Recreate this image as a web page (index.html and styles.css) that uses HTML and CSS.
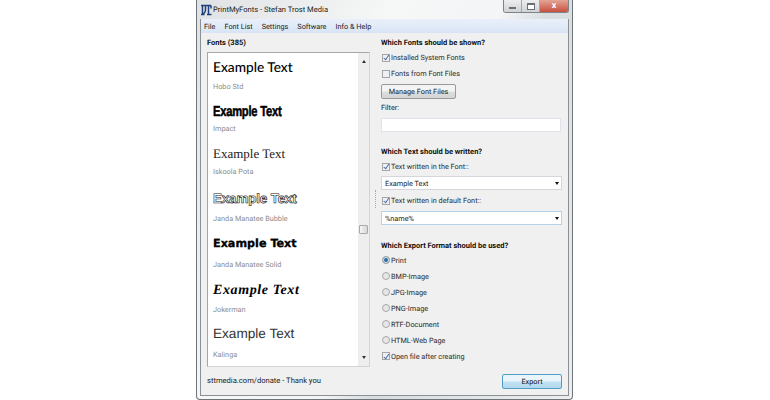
FILE: index.html
```html
<!DOCTYPE html>
<html>

<head>
    <title>PrintMyFonts</title>
    <link rel="stylesheet" href="styles.css">
</head>

<body>
    <div class="window">
        <div class="titlebar">
            <svg class="app-icon" width="12" height="12" viewBox="0 0 12 12">
                <path d="M1 1.5h10M2.5 1.5v9M1 10.5h3.5M5.5 1.5v4.5c0 2-1 3-2 4M8.5 1.5v9M7 10.5h4.5M11 1.5v3" fill="none" stroke="#1d3f7c" stroke-width="1.5"/>
            </svg>
            <span class="title">PrintMyFonts - Stefan Trost Media</span>
            <div class="caption-buttons">
                <span class="cap-btn"><i class="min-glyph"></i></span>
                <span class="cap-btn"><i class="max-glyph"></i></span>
                <span class="cap-btn close">x</span>
            </div>
        </div>
        <div class="inner">
            <div class="menu">
                <span>File</span>
                <span>Font List</span>
                <span>Settings</span>
                <span>Software</span>
                <span>Info &amp; Help</span>
            </div>
            <div class="main">
                <div class="left">
                    <div class="heading">Fonts (385)</div>
                    <div class="list">
                        <div class="items">
                            <div class="item"><div class="sample hobo">Example Text</div><div class="name">Hobo Std</div></div>
                            <div class="item"><div class="sample impact">Example Text</div><div class="name">Impact</div></div>
                            <div class="item"><div class="sample iskoola">Example Text</div><div class="name">Iskoola Pota</div></div>
                            <div class="item"><div class="sample bubble">Example Text</div><div class="name">Janda Manatee Bubble</div></div>
                            <div class="item"><div class="sample solid">Example Text</div><div class="name">Janda Manatee Solid</div></div>
                            <div class="item"><div class="sample joker">Example Text</div><div class="name">Jokerman</div></div>
                            <div class="item"><div class="sample kalinga">Example Text</div><div class="name">Kalinga</div></div>
                        </div>
                        <div class="scrollbar">
                            <span class="arrow up"></span>
                            <span class="thumb"></span>
                            <span class="arrow down"></span>
                        </div>
                    </div>
                    <div class="donate">sttmedia.com/donate - Thank you</div>
                </div>
                <div class="splitter"><span class="grip"></span></div>
                <div class="right">
                    <div class="heading">Which Fonts should be shown?</div>
                    <div class="opt"><span class="check on"></span>Installed System Fonts</div>
                    <div class="opt"><span class="check"></span>Fonts from Font Files</div>
                    <div class="btn manage">Manage Font Files</div>
                    <div class="filter-label">Filter:</div>
                    <div class="input"></div>

                    <div class="heading second">Which Text should be written?</div>
                    <div class="opt"><span class="check on"></span>Text written in the Font::</div>
                    <div class="select">Example Text<span class="drop"></span></div>
                    <div class="opt"><span class="check on"></span>Text written in default Font::</div>
                    <div class="select focus">%name%<span class="drop"></span></div>

                    <div class="heading third">Which Export Format should be used?</div>
                    <div class="opt radio-row"><span class="radio on"></span>Print</div>
                    <div class="opt radio-row"><span class="radio"></span>BMP-Image</div>
                    <div class="opt radio-row"><span class="radio"></span>JPG-Image</div>
                    <div class="opt radio-row"><span class="radio"></span>PNG-Image</div>
                    <div class="opt radio-row"><span class="radio"></span>RTF-Document</div>
                    <div class="opt radio-row"><span class="radio"></span>HTML-Web Page</div>
                    <div class="opt radio-row"><span class="check on"></span>Open file after creating</div>
                    <div class="bottom"><div class="btn export">Export</div></div>
                </div>
            </div>
        </div>
    </div>
</body>

</html>
```
FILE: styles.css
```css
html, body {
    margin: 0;
    height: 400px;
    overflow: hidden;
    background-color: #fff;
}

body {
    display: flex;
    justify-content: center;
    font-family: 'Roboto', sans-serif;
    font-size: 7.3px;
    color: #222;
    text-rendering: geometricPrecision;
}

.window {
    width: 377px;
    height: 400px;
    margin-left: -1px;
    box-sizing: border-box;
    padding: 0 3px 3px 3px;
    border: 1px solid #6f7478;
    border-top: none;
    border-radius: 0 0 4px 4px;
    background: linear-gradient(115deg, #dfe2e4 0%, #f6f7f7 35%, #f4f5f6 55%, #d8dde0 64%, #eceeef 100%);
    display: flex;
    flex-direction: column;
}

.titlebar {
    height: 19px;
    flex: none;
    display: flex;
    align-items: center;
}

.app-icon {
    margin-right: 1px;
}

.title {
    font-size: 7.6px;
    color: #222;
}

.caption-buttons {
    margin-left: auto;
    margin-right: 0;
    align-self: flex-start;
    height: 12px;
    display: flex;
    border: 1px solid #7d8387;
    border-top: none;
    border-radius: 0 0 3px 3px;
    overflow: hidden;
}

.cap-btn {
    width: 17px;
    display: flex;
    align-items: center;
    justify-content: center;
    background: linear-gradient(#eceeef, #d0d3d6);
    border-right: 1px solid #a3a7aa;
}

.cap-btn.close {
    width: 28px;
    border-right: none;
    background: linear-gradient(#e4a596, #c8503f);
    color: #fff;
    font-weight: bold;
    font-size: 9px;
    line-height: 10px;
}

.min-glyph {
    width: 7px;
    height: 2px;
    margin-top: 4px;
    background-color: #fff;
    border: 1px solid #6a7074;
    box-sizing: border-box;
}

.max-glyph {
    width: 8px;
    height: 7px;
    box-sizing: border-box;
    border: 1px solid #6a7074;
    border-top-width: 2px;
    background-color: #fff;
}

.inner {
    flex: 1;
    min-height: 0;
    display: flex;
    flex-direction: column;
    background-color: #f0f0f0;
    border: 1px solid #8b9094;
    border-top: none;
}

.menu {
    height: 14px;
    flex: none;
    display: flex;
    align-items: center;
    padding-left: 3px;
    gap: 9px;
    background: linear-gradient(#eaf0fa, #d8e4f5);
    color: #222;
}

.main {
    flex: 1;
    min-height: 0;
    display: flex;
}

.left {
    width: 163px;
    margin-left: 6px;
    flex: none;
    display: flex;
    flex-direction: column;
}

.heading {
    font-size: 7.5px;
    font-weight: bold;
    color: #111;
    line-height: 12px;
    margin-top: 4px;
}

.list {
    height: 315px;
    margin-top: 3px;
    flex: none;
    box-sizing: border-box;
    display: flex;
    background-color: #fff;
    border: 1px solid #a6a6a6;
    border-bottom-color: #d4d4d4;
    border-right-color: #d4d4d4;
    overflow: hidden;
}

.items {
    flex: 1;
    padding-left: 5px;
}

.sample {
    white-space: nowrap;
    color: #000;
}

.name {
    color: #8c8c8c;
    line-height: 12px;
}

.hobo {
    height: 28px;
    line-height: 28px;
    font-family: 'Lato', sans-serif;
    font-size: 13.7px;
    font-weight: 500;
}

.impact {
    height: 22px;
    line-height: 22px;
    margin-top: 8px;
    font-family: 'Liberation Sans', sans-serif;
    font-size: 14.5px;
    font-weight: bold;
    letter-spacing: -0.3px;
    -webkit-text-stroke: 0.5px #000;
    transform: scaleX(0.77);
    transform-origin: left;
}

.iskoola {
    height: 24px;
    line-height: 24px;
    margin-top: 7px;
    font-family: 'Liberation Serif', serif;
    font-size: 13px;
    color: #222;
}

.bubble {
    height: 29px;
    line-height: 29px;
    margin-top: 6px;
    font-family: 'Liberation Sans', sans-serif;
    font-size: 13.5px;
    font-weight: bold;
    color: #fff;
    -webkit-text-stroke: 0.6px #111;
    letter-spacing: -0.2px;
}

.solid {
    height: 30px;
    line-height: 30px;
    margin-top: 4px;
    font-family: 'DejaVu Sans', sans-serif;
    font-size: 11.2px;
    font-weight: bold;
    -webkit-text-stroke: 0.3px #000;
}

.joker {
    height: 26px;
    line-height: 26px;
    margin-top: 7px;
    font-family: 'Liberation Serif', serif;
    font-size: 14px;
    font-weight: bold;
    font-style: italic;
    letter-spacing: 0.6px;
}

.kalinga {
    height: 30px;
    line-height: 30px;
    margin-top: 3px;
    font-family: 'Liberation Sans', sans-serif;
    font-size: 13.6px;
    color: #333;
}

.scrollbar {
    width: 11px;
    flex: none;
    display: flex;
    flex-direction: column;
    align-items: center;
    background-color: #eeeeee;
    position: relative;
}

.arrow {
    width: 0;
    height: 0;
    border-left: 2px solid transparent;
    border-right: 2px solid transparent;
}

.arrow.up {
    margin-top: 7px;
    border-bottom: 3px solid #333;
}

.arrow.down {
    margin-top: auto;
    margin-bottom: 7px;
    border-top: 3px solid #333;
}

.thumb {
    position: absolute;
    top: 172px;
    left: 1px;
    width: 9px;
    height: 9px;
    box-sizing: border-box;
    border: 1px solid #a8a8a8;
    border-radius: 1px;
    background: linear-gradient(90deg, #f5f5f5, #d8d8d8);
}

.donate {
    margin-top: 8px;
    font-size: 7.6px;
    line-height: 12px;
    color: #222;
}

.splitter {
    width: 11px;
    flex: none;
    display: flex;
    justify-content: center;
}

.grip {
    width: 0;
    height: 18px;
    margin-top: 157px;
    border-left: 1px dotted #a8a8a8;
}

.right {
    flex: none;
    width: 181px;
    display: flex;
    flex-direction: column;
}

.opt {
    display: flex;
    align-items: center;
    height: 15px;
    margin-top: 1px;
    color: #2a2a2a;
    white-space: nowrap;
}

.radio-row {
    height: 16px;
    margin-top: 0;
}

.check {
    width: 8px;
    height: 8px;
    box-sizing: border-box;
    margin: 0 1px 0 1px;
    border: 1px solid #a4a5a5;
    background-color: #eef0f3;
    flex: none;
    position: relative;
}

.check.on::after {
    content: "";
    position: absolute;
    left: 1.5px;
    top: -0.5px;
    width: 2px;
    height: 4.5px;
    border: solid #4a68a8;
    border-width: 0 1px 1px 0;
    transform: rotate(35deg);
}

.radio {
    width: 8px;
    height: 8px;
    box-sizing: border-box;
    margin: 0 1px 0 1px;
    border: 1px solid #a8a8a8;
    border-radius: 50%;
    background-color: #e6e6e6;
    flex: none;
}

.radio.on {
    background-color: #1f6ea8;
    box-shadow: inset 0 0 0 1px #e8e8e8;
}

.btn {
    box-sizing: border-box;
    display: flex;
    align-items: center;
    justify-content: center;
    border: 1px solid #9a9a9a;
    border-radius: 2px;
    background: linear-gradient(#f4f4f4 45%, #dedede 55%, #d4d4d4);
    color: #222;
}

.manage {
    width: 75px;
    height: 15px;
    margin-top: 3px;
}

.filter-label {
    margin-top: 2px;
    line-height: 14px;
    color: #222;
}

.input {
    width: 180px;
    height: 14px;
    margin-top: 3px;
    box-sizing: border-box;
    background-color: #fff;
    border: 1px solid #e2e3ea;
}

.second {
    margin-top: 14px;
}

.third {
    margin-top: 15px;
}

.select {
    height: 14px;
    margin-top: 2px;
    box-sizing: border-box;
    display: flex;
    align-items: center;
    padding-left: 3px;
    background-color: #fff;
    border: 1px solid #d5d6db;
    color: #222;
}

.select.focus {
    border-color: #b4d3ea;
    margin-top: 3px;
}

.select + .opt {
    margin-top: 3px;
}

.drop {
    margin-left: auto;
    margin-right: 2px;
    width: 0;
    height: 0;
    border-left: 2.5px solid transparent;
    border-right: 2.5px solid transparent;
    border-top: 3px solid #111;
}

.bottom {
    display: flex;
    justify-content: flex-end;
    margin-top: 10px;
}

.export {
    width: 60px;
    height: 15px;
    border-color: #4f9fc4;
    background: linear-gradient(#e9f4fb 45%, #bfe0f2 55%, #b2d8ee);
    color: #111;
}
```
